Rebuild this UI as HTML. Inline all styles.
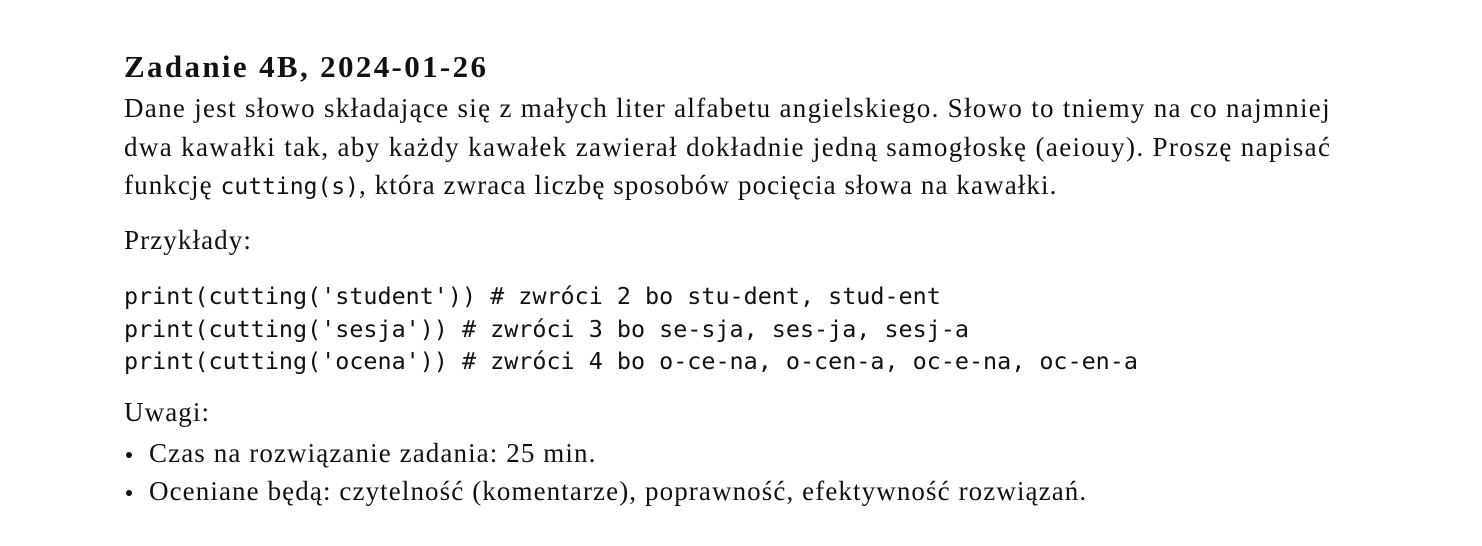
<!DOCTYPE html>
<html><head><meta charset="utf-8"><style>
body{margin:0;width:1482px;height:546px;background:#fff;position:relative;overflow:hidden;font-family:"Liberation Serif",serif;color:#111;}
.l{position:absolute;left:124px;line-height:30px;font-size:27px;letter-spacing:1.1px;white-space:nowrap;}
.t{font-weight:bold;font-size:31px;letter-spacing:2.35px;}
code,.m{font-family:"DejaVu Sans Mono",monospace;letter-spacing:0;}
.m{font-size:23.4px;}
code{font-size:23px;}
.b{left:149px;}
.dot{position:absolute;left:126px;width:6px;height:6px;border-radius:50%;background:#111;}
</style></head><body>
<div class="l t" style="top:52px">Zadanie 4B, 2024-01-26</div>
<div class="l" style="top:93px;letter-spacing:1.3px">Dane jest słowo składające się z małych liter alfabetu angielskiego. Słowo to tniemy na co najmniej</div>
<div class="l" style="top:132px;letter-spacing:1.36px">dwa kawałki tak, aby każdy kawałek zawierał dokładnie jedną samogłoskę (aeiouy). Proszę napisać</div>
<div class="l" style="top:170px">funkcję <code>cutting(s)</code>, która zwraca liczbę sposobów pocięcia słowa na kawałki.</div>
<div class="l" style="top:225px">Przykłady:</div>
<div class="l m" style="top:281px">print(cutting('student')) # zwróci 2 bo stu-dent, stud-ent</div>
<div class="l m" style="top:314px">print(cutting('sesja')) # zwróci 3 bo se-sja, ses-ja, sesj-a</div>
<div class="l m" style="top:346px">print(cutting('ocena')) # zwróci 4 bo o-ce-na, o-cen-a, oc-e-na, oc-en-a</div>
<div class="l" style="top:397px">Uwagi:</div>
<div class="dot" style="top:452px"></div>
<div class="l b" style="top:438px">Czas na rozwiązanie zadania: 25 min.</div>
<div class="dot" style="top:490px"></div>
<div class="l b" style="top:476px">Oceniane będą: czytelność (komentarze), poprawność, efektywność rozwiązań.</div>
</body></html>
